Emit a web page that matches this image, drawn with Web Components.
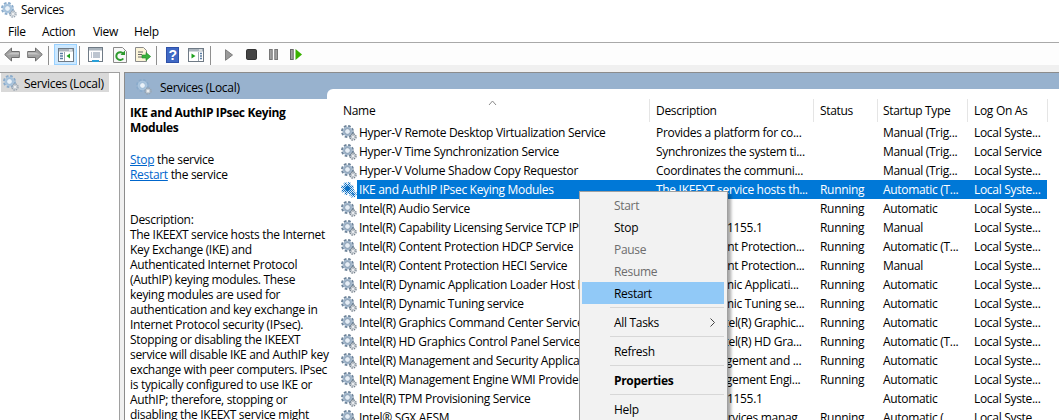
<!DOCTYPE html>
<html lang="en">
<head>
<meta charset="utf-8">
<title>Services</title>
<style>
html,body{margin:0;padding:0;height:420px;overflow:hidden;background:#f0f0f0}
body{font:12px/15px "Open Sans","Liberation Sans",sans-serif;letter-spacing:-.31px;color:#000}
</style>
</head>
<body>
<svc-app></svc-app>
<script>
const el=(name,cls)=>customElements.define(name,cls);
const shadow=(host,html)=>{host.attachShadow({mode:'open'}).innerHTML=html};

el('svc-gear',class extends HTMLElement{connectedCallback(){
  const v=this.getAttribute('variant')||'normal';
  const c={normal:['#6d8399','#a2b7cc','#e6eef6','#77838f','#bcc3ca'],
           light:['#8aabcb','#aac5de','#eaf2f9','#98a4b0','#c8ced4'],
           sel:['url(#d)','url(#d)','#0a6fc4','url(#d)','url(#d)']}[v];
  shadow(this,`<style>:host{display:block;width:16px;height:16px;flex:none}svg{display:block}</style>
  <svg width="16" height="16" viewBox="0 0 16 16">
  <defs><pattern id="d" width="2" height="2" patternUnits="userSpaceOnUse"><rect width="2" height="2" fill="#0a6fc4"/><rect width="1" height="1" fill="#d7e8f6"/><rect x="1" y="1" width="1" height="1" fill="#d7e8f6"/></pattern></defs>
  <circle cx="6.5" cy="6.5" r="5.5" fill="none" stroke="${c[0]}" stroke-width="2" stroke-dasharray="2.6 1.72"/>
  <circle cx="6.5" cy="6.5" r="4.8" fill="${c[1]}"/>
  <circle cx="6.5" cy="6.5" r="2.8" fill="${c[2]}" stroke="${c[0]}" stroke-width=".6"/>
  <circle cx="12" cy="12" r="3" fill="none" stroke="${c[3]}" stroke-width="1.4" stroke-dasharray="1.5 .86"/>
  <circle cx="12" cy="12" r="2.3" fill="${c[4]}"/>
  <circle cx="12" cy="12" r=".9" fill="${v==='sel'?'#0a6fc4':'#fff'}"/>
  </svg>`);
}});

el('svc-titlebar',class extends HTMLElement{connectedCallback(){
  shadow(this,`<style>:host{display:flex;align-items:center;gap:4px;height:19px;padding:0 0 1px 1px;background:#fff}</style>
  <svc-gear variant="light"></svc-gear><slot></slot>`);
}});

el('svc-menubar',class extends HTMLElement{connectedCallback(){
  shadow(this,`<style>:host{display:flex;background:#fff;align-items:center;padding:0 0 0 8px;border-bottom:1px solid #a9a9a9;height:22px}
  ::slotted(span){display:block}</style><slot></slot>`);
}});

const W=(inner)=>`<rect x=".5" y=".5" width="15" height="13" fill="#fff" stroke="#6f7a85"/><rect x="1" y="1" width="14" height="2.5" fill="#aab4bd"/><rect x="11" y="1.5" width="3" height="1" fill="#fff"/>${inner}`;
const ICONS={
 back:[16,15,`<path d="M.7 7.500 7.500 1v3.500H15.300v6H7.500V14z" fill="#a3a3a3" stroke="#6e6e6e"/><path d="M8 5.500h7v2H3z" fill="#c6c6c6"/>`],
 forward:[16,15,`<path d="M15.300 7.500 8.500 1v3.500H.7v6h7.800V14z" fill="#a3a3a3" stroke="#6e6e6e"/><path d="M8 5.500H1v2h12z" fill="#c6c6c6"/>`],
 tree:[16,14,W(`<path d="M6.500 4v9" stroke="#9aa5af"/><path d="M2 5.500h3M2 8h3M2 10.500h3" stroke="#5b7ea3" stroke-width="1.300"/><path d="M12 5.500v5l-3.500-2.500z" fill="#1ea11e"/>`)],
 props:[16,16,`<rect x=".5" y=".5" width="14" height="14" fill="#fff" stroke="#6f7a85"/><rect x="1" y="1" width="13" height="2.500" fill="#aab4bd"/><path d="M3 6h9M3 8h9M3 10h9" stroke="#7b8aa0" stroke-dasharray="1 1 7 0"/><rect x="4" y="13" width="7" height="2" fill="#2aa0d8"/>`],
 refresh:[14,16,`<path d="M.5.500h9l4 4v11H.5z" fill="#f8f8f8" stroke="#8a8a8a"/><path d="M10.300 11.500a3.900 3.900 0 1 1 .2-4.500" fill="none" stroke="#2d9a2d" stroke-width="2"/><path d="M7.500 8h4.500V3.500z" fill="#2d9a2d"/>`],
 exportlist:[16,16,`<path d="M.5.500h8l3 3v11H.5z" fill="#fbf4d8" stroke="#8a8a8a"/><path d="M3 5h5M3 7.500h4M3 10h4" stroke="#666"/><path d="M7 8h4V5.500l4.700 4-4.700 4V11H7z" fill="#38b13c" stroke="#1f8a25" stroke-width=".6"/>`],
 help:[13,16,`<rect width="13" height="16" fill="#2d50a8"/><rect x="1" y="1" width="11" height="14" fill="#3f68c4"/><text x="6.500" y="13" font-family="Liberation Sans" font-weight="700" font-size="14" text-anchor="middle" fill="#fff">?</text>`],
 pane:[16,14,W(`<path d="M10.500 4v9" stroke="#9aa5af"/><path d="M3.500 5.500v5L7.500 8z" fill="#1ea11e"/><path d="M12 5.500h2M12 8h2M12 10.500h2" stroke="#5b7ea3" stroke-width="1.300"/>`)],
 play:[8,12,`<path d="M.5.700v10.600L7.500 6z" fill="#9a9a9a" stroke="#7d7d7d"/>`],
 stop:[11,11,`<rect x=".5" y=".5" width="10" height="10" rx="1.200" fill="#444" stroke="#333"/>`],
 pause:[9,11,`<rect x=".5" y=".5" width="2.700" height="10" fill="#a0a0a0" stroke="#777"/><rect x="5.800" y=".5" width="2.700" height="10" fill="#a0a0a0" stroke="#777"/>`],
 resume:[12,11,`<rect x=".5" y=".5" width="2.700" height="10" fill="#a0a0a0" stroke="#666"/><path d="M5.500 0v11l6.500-5.500z" fill="#38b000"/>`]
};
el('svc-tool',class extends HTMLElement{connectedCallback(){
  const [w,h,d]=ICONS[this.getAttribute('icon')];
  shadow(this,`<style>:host{display:flex;align-items:center;justify-content:center;box-sizing:border-box;width:23px;height:21px;flex:none;margin-top:1px}
  :host([active]){background:#cce8ff;outline:1px solid #99d1ff;outline-offset:-1px}svg{display:block}</style>
  <svg width="${w}" height="${h}" viewBox="0 0 ${w} ${h}">${d}</svg>`);
}});
el('svc-toolsep',class extends HTMLElement{connectedCallback(){
  shadow(this,`<style>:host{display:block;width:1px;height:19px;margin-top:2px;background:#8f8f8f;flex:none}</style>`);
}});
el('svc-toolbar',class extends HTMLElement{connectedCallback(){
  shadow(this,`<style>:host{display:flex;align-items:center;height:22px;background:#fdfdfd}
  .s1{margin-left:2px;margin-right:5px}.s2{margin-left:2px;margin-right:4px}.s3{margin-left:3px;margin-right:6px}.g{margin-left:1px}.n{width:22px}</style>
  <svc-tool icon="back"></svc-tool><svc-tool icon="forward"></svc-tool>
  <svc-toolsep class="s1"></svc-toolsep><svc-tool icon="tree" active></svc-tool>
  <svc-toolsep class="s2"></svc-toolsep><svc-tool icon="props"></svc-tool><svc-tool class="g" icon="refresh"></svc-tool><svc-tool icon="exportlist"></svc-tool>
  <svc-toolsep class="s2"></svc-toolsep><svc-tool icon="help"></svc-tool><svc-tool icon="pane"></svc-tool>
  <svc-toolsep class="s3"></svc-toolsep><svc-tool class="n" style="margin-left:1px" icon="play"></svc-tool><svc-tool class="n" icon="stop"></svc-tool><svc-tool class="n" icon="pause"></svc-tool><svc-tool icon="resume"></svc-tool>`);
}});

el('svc-tree',class extends HTMLElement{connectedCallback(){
  shadow(this,`<style>:host{display:block;background:#fff;border:1px solid #a0a0a0;border-width:1px 1px 0 0;padding-left:1px}
  .i{display:flex;align-items:center;gap:5px;height:19px;width:108px;background:#d9d9d9;padding:1px 0 0 2px;box-sizing:border-box}</style>
  <div class="i"><svc-gear variant="light"></svc-gear><slot></slot></div>`);
}});

el('svc-detail',class extends HTMLElement{connectedCallback(){
  shadow(this,`<style>:host{display:block;padding:6px 0 0 5px;white-space:nowrap;min-width:0;position:relative;z-index:2}
  h2{font:inherit;font-weight:700;letter-spacing:-.38px;margin:0 0 17px}a{color:#0066cc;text-decoration:underline}p{margin:0 0 30px}</style>
  <h2>IKE and AuthIP IPsec Keying<br>Modules</h2>
  <p><a>Stop</a> the service<br><a>Restart</a> the service</p>
  <div>Description:<br>The IKEEXT service hosts the Internet<br>Key Exchange (IKE) and<br>Authenticated Internet Protocol<br>(AuthIP) keying modules. These<br>keying modules are used for<br>authentication and key exchange in<br>Internet Protocol security (IPsec).<br>Stopping or disabling the IKEEXT<br>service will disable IKE and AuthIP key<br>exchange with peer computers. IPsec<br>is typically configured to use IKE or<br>AuthIP; therefore, stopping or<br>disabling the IKEEXT service might</div>`);
}});

const COLS='16px 292px 164px 64px 90px 80px';
el('svc-head',class extends HTMLElement{connectedCallback(){
  shadow(this,`<style>:host{display:grid;grid-template-columns:309px 164px 64px 90px 80px;height:24px;position:relative}
  div{display:flex;align-items:center;padding-left:6px;padding-bottom:1px;border-right:1px solid #e5e5e5;box-sizing:border-box;height:23px}
  div:first-of-type{padding-left:2px}
  div:nth-of-type(4){padding-left:5px}
  svg{position:absolute;left:147px;top:1px}</style>
  <div>Name</div><div>Description</div><div>Status</div><div>Startup Type</div><div>Log On As</div>
  <svg width="9" height="6" viewBox="0 0 9 6"><path d="M1 5 4.500 1 8 5" fill="none" stroke="#8a8a8a"/></svg>`);
}});
el('svc-row',class extends HTMLElement{connectedCallback(){
  const a=k=>this.getAttribute(k)||'';
  const sel=this.hasAttribute('selected');
  shadow(this,`<style>:host{display:block;height:19px}
  .r{display:grid;grid-template-columns:${COLS};height:19px;align-items:center;white-space:nowrap}
  .c{overflow:hidden;padding-left:7px;line-height:19px;height:19px}
  .c.f{padding-left:2px}
  ${sel?'.c{background:#0078d7;color:#fff}':''}</style>
  <div class="r"><svc-gear ${sel?'variant="sel"':''}></svc-gear><div class="c f">${a('name')}</div><div class="c">${a('desc')}</div><div class="c">${a('status')}</div><div class="c" style="padding-left:6px">${a('start')}</div><div class="c">${a('logon')}</div></div>`);
}});
el('svc-list',class extends HTMLElement{connectedCallback(){
  shadow(this,`<style>:host{display:block;background:#fff;border-top-left-radius:6px;padding:10px 0 0 14px;overflow:hidden;min-width:0;position:relative;z-index:1}
  .w{width:707px}</style><div class="w"><svc-head></svc-head><slot></slot></div>`);
}});

el('svc-panel',class extends HTMLElement{connectedCallback(){
  shadow(this,`<style>:host{display:grid;grid-template-columns:202px minmax(0,1fr);grid-template-rows:16px 10px 1fr;background:#fff;border:1px solid #8c8c8c;border-width:1px 0 0 1px;min-width:0;overflow:hidden}
  .h{grid-column:1/3;grid-row:1/3;background:#98b2ce;display:flex;align-items:center;gap:8px;padding:2px 0 0 11px}
  ::slotted(svc-detail){grid-column:1;grid-row:3}
  ::slotted(svc-list){grid-column:2;grid-row:2/4}</style>
  <div class="h"><svc-gear variant="light"></svc-gear><span>Services (Local)</span></div><slot></slot>`);
}});

el('svc-menuitem',class extends HTMLElement{connectedCallback(){
  shadow(this,`<style>:host{display:flex;align-items:center;justify-content:space-between;height:22px;margin:0 2px;padding:0 10px 0 32px;box-sizing:border-box;color:#000}
  :host([disabled]){color:#6d6d6d}:host([hot]){background:#91c9f7;margin-right:3px}:host([strong]){font-weight:700}
  svg{display:block}</style><slot></slot>${this.hasAttribute('sub')?'<svg width="5" height="9" viewBox="0 0 5 9"><path d="M.5.500l4 4-4 4" fill="none" stroke="#444"/></svg>':''}`);
}});
el('svc-menusep',class extends HTMLElement{connectedCallback(){
  shadow(this,`<style>:host{display:block;height:7px;padding:3px 3px 3px 30px;box-sizing:border-box}div{height:1px;background:#d7d7d7}</style><div></div>`);
}});
el('svc-contextmenu',class extends HTMLElement{connectedCallback(){
  shadow(this,`<style>:host{position:absolute;left:579px;top:191px;width:149px;height:240px;box-sizing:border-box;padding-top:2px;background:#f2f2f2;border:1px solid #a0a0a0;box-shadow:3px 3px 3px rgba(0,0,0,.35);z-index:5}</style><slot></slot>`);
}});

const rows=[
['Hyper-V Remote Desktop Virtualization Service','Provides a platform for co...','','Manual (Trig...','Local Syste...'],
['Hyper-V Time Synchronization Service','Synchronizes the system ti...','','Manual (Trig...','Local Service'],
['Hyper-V Volume Shadow Copy Requestor','Coordinates the communi...','','Manual (Trig...','Local Syste...'],
['IKE and AuthIP IPsec Keying Modules','The IKEEXT service hosts th...','Running','Automatic (T...','Local Syste...'],
['Intel(R) Audio Service','','Running','Automatic','Local Syste...'],
['Intel(R) Capability Licensing Service TCP IP Interface','Version: 1.63.1155.1','Running','Manual','Local Syste...'],
['Intel(R) Content Protection HDCP Service','Intel(R) Content Protection...','Running','Automatic (T...','Local Syste...'],
['Intel(R) Content Protection HECI Service','Intel(R) Content Protection...','Running','Manual','Local Syste...'],
['Intel(R) Dynamic Application Loader Host Interface','Intel(R) Dynamic Applicati...','Running','Automatic','Local Syste...'],
['Intel(R) Dynamic Tuning service','Intel(R) Dynamic Tuning se...','Running','Automatic','Local Syste...'],
['Intel(R) Graphics Command Center Service','Service for Intel(R) Graphic...','Running','Automatic','Local Syste...'],
['Intel(R) HD Graphics Control Panel Service','Service for Intel(R) HD Gra...','Running','Automatic (T...','Local Syste...'],
['Intel(R) Management and Security Application Local','Intel(R) Management and ...','Running','Automatic','Local Syste...'],
['Intel(R) Management Engine WMI Provider Registration','Intel(R) Management Engi...','Running','Automatic','Local Syste...'],
['Intel(R) TPM Provisioning Service','Version: 1.63.1155.1','','Automatic','Local Syste...'],
['Intel® SGX AESM','Intel® SGX services manag...','Running','Automatic (...','Local Syste...']
];
el('svc-app',class extends HTMLElement{connectedCallback(){
  const esc=s=>s.replace(/"/g,'&quot;');
  const rowHtml=rows.map((r,i)=>`<svc-row ${i===3?'selected':''} name="${esc(r[0])}" desc="${esc(r[1])}" status="${r[2]}" start="${esc(r[3])}" logon="${esc(r[4])}"></svc-row>`).join('');
  shadow(this,`<style>:host{display:block;position:relative;width:1059px;height:420px;overflow:hidden}
  .b{display:grid;grid-template-columns:120px minmax(0,1fr);column-gap:4px;margin-top:7px;height:348px}</style>
  <svc-titlebar>Services</svc-titlebar>
  <svc-menubar><span style="width:34px">File</span><span style="width:51px">Action</span><span style="width:41px">View</span><span>Help</span></svc-menubar>
  <svc-toolbar></svc-toolbar>
  <div class="b"><svc-tree>Services (Local)</svc-tree>
  <svc-panel><svc-detail></svc-detail><svc-list>${rowHtml}</svc-list></svc-panel></div>
  <svc-contextmenu>
    <svc-menuitem disabled>Start</svc-menuitem><svc-menuitem>Stop</svc-menuitem><svc-menuitem disabled>Pause</svc-menuitem><svc-menuitem disabled>Resume</svc-menuitem><svc-menuitem hot>Restart</svc-menuitem>
    <svc-menusep></svc-menusep><svc-menuitem sub>All Tasks</svc-menuitem>
    <svc-menusep></svc-menusep><svc-menuitem>Refresh</svc-menuitem>
    <svc-menusep></svc-menusep><svc-menuitem strong>Properties</svc-menuitem>
    <svc-menusep></svc-menusep><svc-menuitem>Help</svc-menuitem>
  </svc-contextmenu>`);
}});
</script>
</body>
</html>
